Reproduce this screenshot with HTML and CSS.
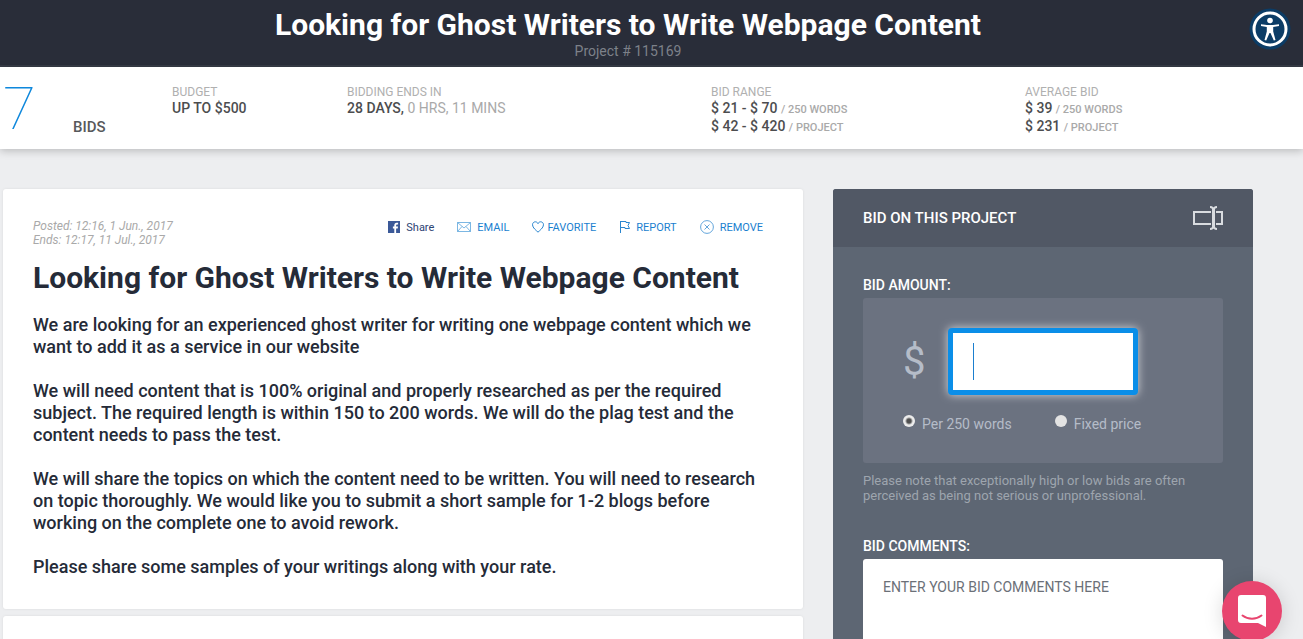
FILE: index.html
```html
<!DOCTYPE html>
<html lang="en">
<head>
    <meta charset="UTF-8">
    <meta name="viewport" content="width=device-width, initial-scale=1.0">
    <title>Looking for Ghost Writers to Write Webpage Content</title>
    <link rel="stylesheet" href="styles.css">
</head>
<body>
    <!-- top bar -->
    <header class="header">
        <h1>Looking for Ghost Writers to Write Webpage Content</h1>
        <p>Project # 115169</p>
    </header>

    <!-- project numbers -->
    <div class="stats">
        <div class="bids"><span class="count">7</span><span class="bids_label">BIDS</span></div>
        <div class="stat">
            <h4>BUDGET</h4>
            <p>UP TO $500</p>
        </div>
        <div class="stat">
            <h4>BIDDING ENDS IN</h4>
            <p>28 DAYS, <span class="time">0 HRS, 11 MINS</span></p>
        </div>
        <div class="stat">
            <h4>BID RANGE</h4>
            <p>$ 21 - $ 70 <small>/ 250 WORDS</small></p>
            <p>$ 42 - $ 420 <small>/ PROJECT</small></p>
        </div>
        <div class="stat">
            <h4>AVERAGE BID</h4>
            <p>$ 39 <small>/ 250 WORDS</small></p>
            <p>$ 231 <small>/ PROJECT</small></p>
        </div>
    </div>

    <div class="main">
        <main class="content">
            <article class="card project">
                <div class="meta">
                    <p class="dates">Posted: 12:16, 1 Jun., 2017<br>Ends: 12:17, 11 Jul., 2017</p>
                    <ul class="actions">
                        <li><a href="#" class="share">
                            <svg width="12" height="12" viewBox="0 0 12 12"><rect width="12" height="12" fill="#3b5998"/><path d="M6.300 12V7.400H4.900V5.600h1.400V4.200c0-1.500.9-2.400 2.400-2.400h1.400v1.700H9c-.6 0-.9.3-.9.9v1.200h1.900l-.3 1.800H8.100V12z" fill="#fff"/></svg>
                            Share</a></li>
                        <li><a href="#">
                            <svg width="14" height="10" viewBox="0 0 14 10" fill="none" stroke="#5ba4dc"><path d="M.5.5h13v9H.5zM.5.5 7 6l6.500-5.500M.5 9.500 5 4.500M13.500 9.500 9 4.500" stroke-width=".8"/></svg>
                            EMAIL</a></li>
                        <li><a href="#" class="favorite">
                            <svg width="12" height="12" viewBox="0 0 12 12" fill="none" stroke="#2a86cf"><path d="M6 11.200C4.300 9.500.5 6.800.5 3.800.5 2 1.800.8 3.300.8 4.500.8 5.500 1.500 6 2.600 6.500 1.500 7.500.8 8.700.8c1.500 0 2.800 1.200 2.800 3 0 3-3.800 5.700-5.500 7.400z"/></svg>
                            FAVORITE</a></li>
                        <li><a href="#">
                            <svg width="11" height="12" viewBox="0 0 11 12" fill="none" stroke="#2a86cf"><path d="M1.500 0v12M1.500.5H7v1h3.500L9 4.500l1.500 3H6v-1H1.500"/></svg>
                            REPORT</a></li>
                        <li><a href="#">
                            <svg width="14" height="14" viewBox="0 0 14 14" fill="none" stroke="#3c8fd2" stroke-width=".8"><circle cx="7" cy="7" r="6.400"/><path d="M4.500 4.500l5 5M9.500 4.500l-5 5"/></svg>
                            REMOVE</a></li>
                    </ul>
                </div>
                <h2>Looking for Ghost Writers to Write Webpage Content</h2>
                <div class="desc">
                    <p>We are looking for an experienced ghost writer for writing one webpage content which we want to add it as a service in our website</p>
                    <p>We will need content that is 100% original and properly researched as per the required subject. The required length is within 150 to 200 words. We will do the plag test and the content needs to pass the test.</p>
                    <p>We will share the topics on which the content need to be written. You will need to research on topic thoroughly. We would like you to submit a short sample for 1-2 blogs before working on the complete one to avoid rework.</p>
                    <p>Please share some samples of your writings along with your rate.</p>
                </div>
            </article>
            <section class="card"></section>
        </main>

        <!-- bid form -->
        <form class="bid">
            <div class="bid_title">
                <h3>BID ON THIS PROJECT</h3>
                <svg width="30" height="24" viewBox="0 0 30 24" fill="none" stroke="#d9dce0"><path d="M18 6H1v12h17M23 6h6v12h-6" stroke-width="2"/><path d="M17 1c2 0 3.500 1 3.500 4v14c0 3-1.500 4-3.500 4M24 1c-2 0-3.500 1-3.500 4v14c0 3 1.500 4 3.500 4" stroke-width="2"/><path d="M20.500 3v18" stroke-width="3"/></svg>
            </div>
            <div class="bid_body">
                <label for="amount">BID AMOUNT:</label>
                <div class="amount_box">
                    <div class="amount_row">
                        <span class="dollar">$</span>
                        <input type="text" id="amount" class="amount">
                    </div>
                    <div class="types">
                        <label><input type="radio" name="type" checked><span>Per 250 words</span></label>
                        <label><input type="radio" name="type"><span>Fixed price</span></label>
                    </div>
                </div>
                <p class="note">Please note that exceptionally high or low bids are often perceived as being not serious or unprofessional.</p>
                <label for="comments">BID COMMENTS:</label>
                <textarea id="comments" placeholder="ENTER YOUR BID COMMENTS HERE"></textarea>
            </div>
        </form>
    </div>

    <!-- floating buttons -->
    <button type="button" class="access" aria-label="Accessibility">
        <svg width="42" height="42" viewBox="0 0 42 42"><circle cx="21" cy="21" r="20.500" fill="#0b3c66"/><circle cx="21" cy="21" r="16" fill="none" stroke="#fff" stroke-width="3"/><circle cx="21" cy="12.500" r="2.800" fill="#fff"/><path d="M12 16.200l6 .9h6l6-.9v1.700l-5.800 1.200v4.400l2.300 8.500-1.700.5L21.500 25h-1l-3.300 7.500-1.700-.5 2.300-8.500v-4.400L12 17.900z" fill="#fff"/></svg>
    </button>
    <button type="button" class="chat" aria-label="Chat">
        <svg width="28" height="32" viewBox="0 0 28 32"><path d="M3 0h22a3 3 0 0 1 3 3v29l-8-4H3a3 3 0 0 1-3-3V3a3 3 0 0 1 3-3z" fill="#fff"/><path d="M4.500 20.500c5.500 4.300 13.500 4.300 19 0" fill="none" stroke="#e8456f" stroke-width="2" stroke-linecap="round"/></svg>
    </button>
</body>
</html>
```
FILE: styles.css
```css
*{
    margin: 0;
    padding: 0;
    box-sizing: border-box;
}
html{
    height: 100%;
}
body{
    height: 100%;
    overflow: hidden;
    background: #edeef0;
    font-family: Roboto, "Liberation Sans", sans-serif;
    font-size: 14px;
    color: #252b38;
}
li{
    list-style: none;
}
a{
    text-decoration: none;
}
svg{
    display: block;
    flex: none;
}
button{
    border: none;
    background: none;
    cursor: pointer;
}

/* header */
.header{
    padding: 7px 50px 6px 3px;
    background: #292d39;
    border-bottom: 2px solid #363b46;
    text-align: center;
}
.header h1{
    font-size: 30px;
    line-height: 36px;
    color: #fff;
}
.header p{
    line-height: 16px;
    color: #7d8189;
}

/* stats */
.stats{
    display: grid;
    grid-template-columns: 169fr 175fr 364fr 314fr 228fr;
    padding: 18px 50px 12px 3px;
    background: #fff;
    box-shadow: 0 2px 8px rgba(0,0,0,.22);
}
.bids{
    display: flex;
    height: 52px;
}
.bids .count{
    width: 70px;
    font-size: 60px;
    line-height: 48px;
    font-weight: 100;
    color: #0f88dc;
}
.bids .bids_label{
    align-self: flex-end;
    font-size: 15px;
    line-height: 20px;
    font-weight: 500;
    color: #58595b;
}
.stat h4{
    font-size: 12px;
    line-height: 14px;
    font-weight: 400;
    color: #b0b0b0;
}
.stat p{
    height: 18px;
    line-height: 18px;
    font-weight: 500;
    color: #4c4d4f;
}
.stat .time{
    font-weight: 400;
    color: #a9a9a9;
}
.stat small{
    font-size: 11px;
    color: #a9a9a9;
}

/* main */
.main{
    display: flex;
    align-items: flex-start;
    gap: 30px;
    padding: 40px 50px 40px 3px;
}
.content{
    flex: 1;
}
.card{
    min-height: 80px;
    margin-bottom: 7px;
    background: #fff;
    border-radius: 3px;
    box-shadow: 0 0 3px rgba(0,0,0,.08);
}
.project{
    padding: 30px 40px 31px 30px;
}
.meta{
    display: flex;
    justify-content: space-between;
    align-items: flex-start;
}
.dates{
    font-size: 12px;
    line-height: 14px;
    font-style: italic;
    color: #a9a9a9;
}
.actions{
    display: flex;
    gap: 23px;
}
.actions a{
    display: flex;
    align-items: center;
    gap: 6px;
    height: 16px;
    font-size: 11px;
    color: #1b7fcf;
}
.actions .share{
    color: #2d4373;
}
.actions .favorite{
    gap: 3px;
}
.project h2{
    margin: 13px 0 18px;
    font-size: 30px;
    line-height: 36px;
}
.desc p{
    font-size: 18px;
    line-height: 22px;
    font-weight: 500;
    margin-bottom: 22px;
}
.desc p:last-child{
    margin-bottom: 0;
}

/* bid form */
.bid{
    width: 420px;
    border-radius: 3px;
    background: #5d6673;
    overflow: hidden;
}
.bid_title{
    display: flex;
    justify-content: space-between;
    align-items: center;
    height: 58px;
    padding: 0 30px;
    background: #515865;
}
.bid_title h3{
    font-size: 15px;
    font-weight: 500;
    color: #fff;
}
.bid_body{
    padding: 30px;
}
.bid_body > label{
    display: block;
    line-height: 16px;
    margin-bottom: 5px;
    font-weight: 500;
    color: #fff;
}
.amount_box{
    height: 165px;
    padding: 30px 40px;
    border-radius: 3px;
    background: #6b7280;
}
.amount_row{
    display: flex;
    align-items: center;
    gap: 20px;
}
.dollar{
    width: 25px;
    font-size: 40px;
    line-height: 66px;
    color: #b5bcc8;
}
.amount{
    width: 190px;
    height: 67px;
    padding: 0 20px;
    border: 5px solid #0a8ee8;
    border-radius: 4px;
    /* caret line */
    background: #fff linear-gradient(#1b7fcf, #1b7fcf) no-repeat 20px 10px / 1px 37px;
    box-shadow: 0 0 10px rgba(255,255,255,.7);
    outline: none;
    font: 32px Roboto, sans-serif;
}
.types{
    display: flex;
    gap: 43px;
    margin-top: 17px;
}
.types label{
    display: flex;
    align-items: flex-start;
    gap: 7px;
    color: #b5bcc8;
}
.types span{
    line-height: 24px;
}
.types input{
    appearance: none;
    width: 12px;
    height: 12px;
    margin-top: 3px;
    border-radius: 50%;
    background: #e3e3e3;
}
.types input:checked{
    background: radial-gradient(circle, #505050 0 2px, #ececec 4px);
}
.note{
    margin: 10px 0 35px;
    font-size: 13px;
    line-height: 15px;
    color: #9ea5ae;
}
textarea{
    display: block;
    width: 100%;
    height: 150px;
    padding: 20px;
    border: none;
    border-radius: 3px;
    outline: none;
    resize: none;
    font: 14px Roboto, sans-serif;
}
textarea::placeholder{
    color: #6b7078;
}

/* floating buttons */
.access{
    position: absolute;
    top: 8px;
    right: 12px;
}
.chat{
    display: flex;
    justify-content: center;
    align-items: center;
    position: fixed;
    right: 21px;
    bottom: -2px;
    width: 60px;
    height: 60px;
    border-radius: 50%;
    background: #e8456f;
    box-shadow: 0 2px 20px rgba(0,0,0,.15);
}
```
